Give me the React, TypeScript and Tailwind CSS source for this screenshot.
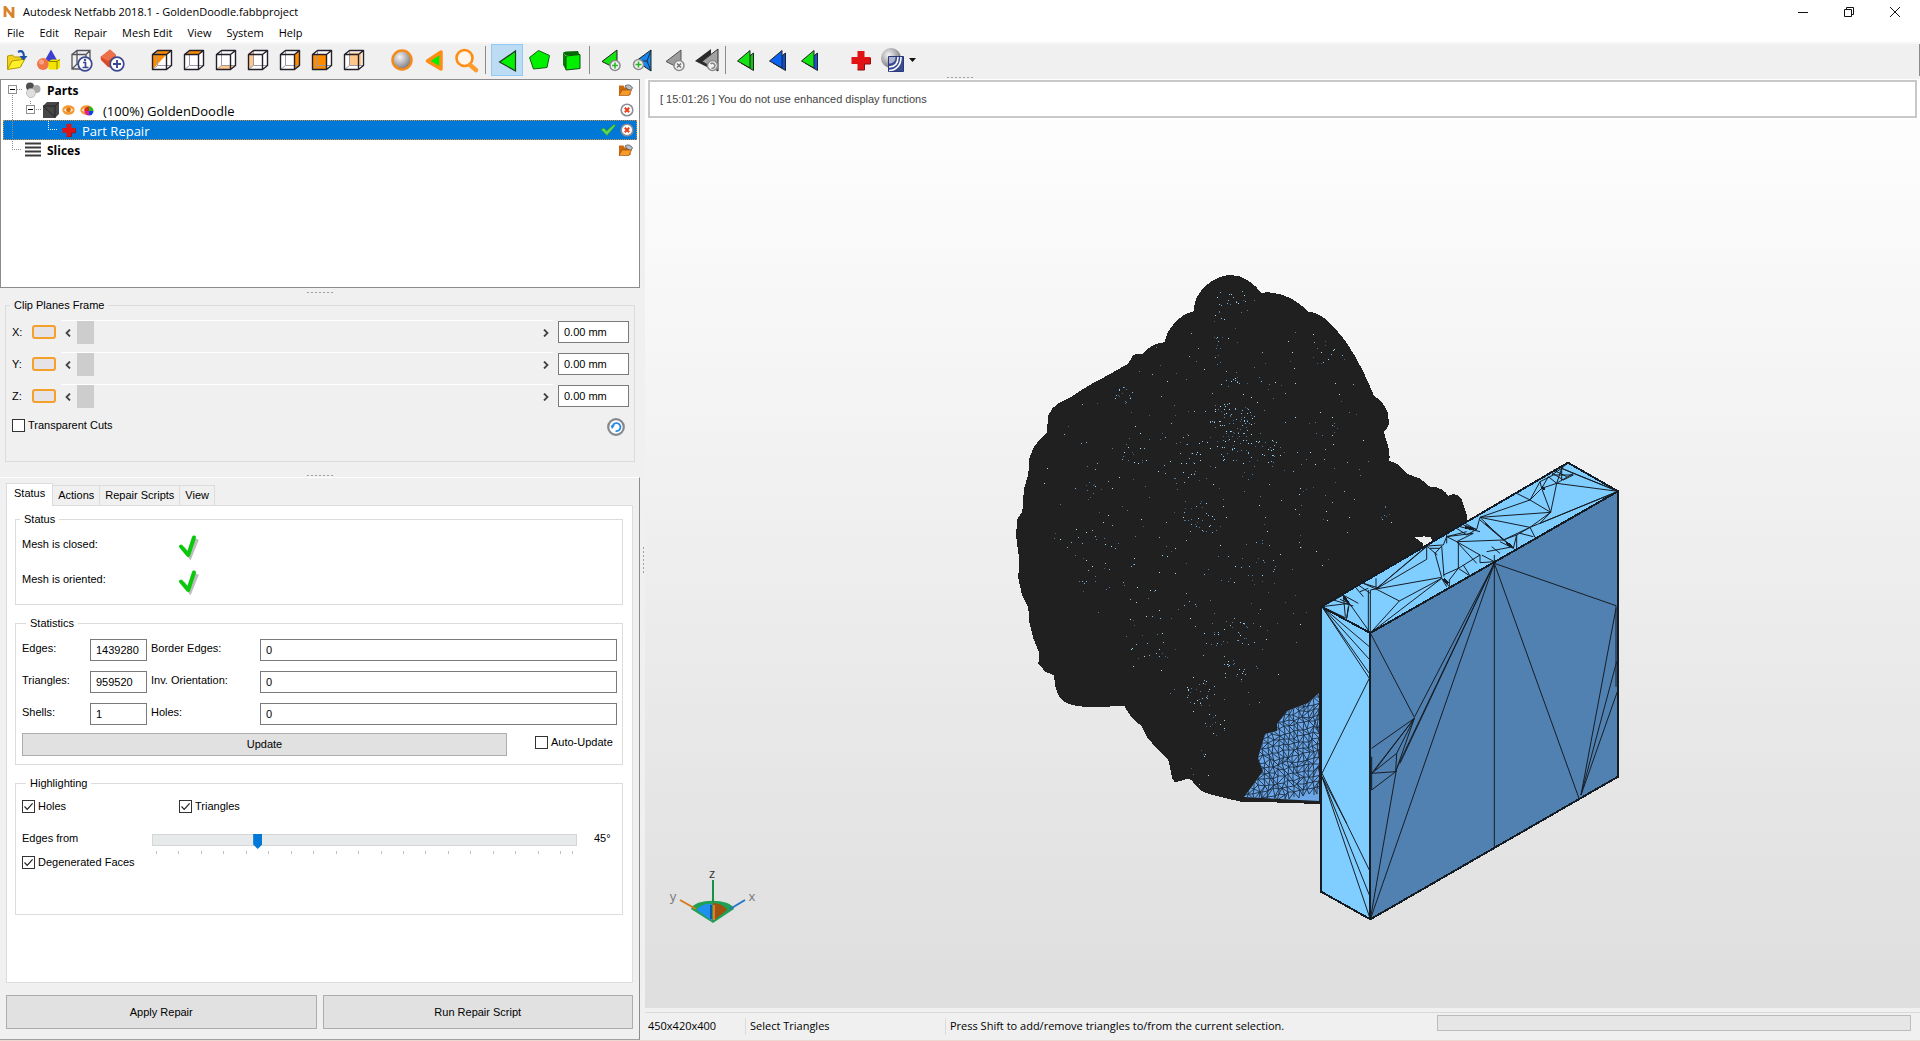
import React, { useState } from "react";

const UI = "font-['Open_Sans','Noto_Sans',sans-serif]";

// ! Small building blocks
const Svg = ({ children, className = "size-8", box = "0 0 32 32" }: any) => (
  <svg className={`shrink-0 ${className}`} viewBox={box} fill="none" aria-hidden="true">
    {children}
  </svg>
);

const Check = ({ id, label, checked = false }: any) => {
  const [on, setOn] = useState(checked);
  return (
    <label htmlFor={id} className="flex items-center gap-[3px]">
      <span className="grid size-[13px]">
        <input
          id={id}
          type="checkbox"
          checked={on}
          onChange={(e) => setOn(e.target.checked)}
          className="peer col-start-1 row-start-1 size-[13px] appearance-none border border-[#333] bg-white"
        />
        <svg
          viewBox="0 0 13 13"
          className="pointer-events-none invisible col-start-1 row-start-1 size-[13px] peer-checked:visible"
        >
          <path d="M2.5 6.5 5.2 9.3 10.6 3.4" stroke="#222" strokeWidth="1.2" fill="none" />
        </svg>
      </span>
      {label}
    </label>
  );
};

const Group = ({ title, children, className = "" }: any) => (
  <fieldset className={`min-w-0 border border-[#dcdcdc] ${className}`}>
    <legend className="ml-1 px-1 leading-4">{title}</legend>
    {children}
  </fieldset>
);

const Grip = ({ vertical = false }: any) => (
  <span
    className={
      vertical
        ? "block h-7 w-[3px] bg-[radial-gradient(circle,#a0a0a0_1px,transparent_1px)] bg-[length:3px_4px]"
        : "block h-[3px] w-7 bg-[radial-gradient(circle,#a0a0a0_1px,transparent_1px)] bg-[length:4px_3px]"
    }
  />
);

// ! Toolbar icons
const Cube = ({ children }: any) => (
  <Svg>
    <path d="M6.5 10.5 11.5 6.5h14v15l-5 4h-14z" fill="#fff" />
    {children}
    <path d="M11.5 6.5v15h14M11.5 21.5l-5 4" stroke="#9a9aa8" />
    <path
      d="M6.5 10.5h14v15h-14zM6.5 10.5l5-4h14v15l-5 4M20.5 10.5l5-4"
      stroke="#23202a"
      strokeWidth="1.4"
      strokeLinejoin="round"
    />
  </Svg>
);

const Badge = ({ x, y, color, children }: any) => (
  <g>
    <circle cx={x} cy={y} r="5" fill="#f2f2f2" stroke="#8a8a8a" strokeWidth="1.5" />
    <g stroke={color} strokeWidth="1.6">{children}</g>
  </g>
);

const DoubleTriangle = ({ front, back }: any) => (
  <Svg>
    <path d="M11 19 23.5 9v17.5z" fill={back} stroke="#222" />
    <path d="M7.5 17 20 6.5V24z" fill={front} stroke="#222" />
  </Svg>
);

const RedCross = ({ className, box = "0 0 32 32" }: any) => (
  <Svg className={className} box={box}>
    <path d="M12.5 7h7v6h6v7h-6v6h-7v-6h-6v-7h6z" fill="#e01414" />
    <path d="M19.5 20h6v-6M12.5 26h7v-6" stroke="#8e0b0b" />
  </Svg>
);

const fileTools = [
  {
    name: "Open",
    icon: (
      <Svg>
        <path d="M7.5 12l5-1 2 2h7v9l-14 3z" fill="#f2d21c" stroke="#b39a00" />
        <path d="M7.5 25.5 12 17l13-2-5 8.500z" fill="#fff02a" stroke="#b39a00" />
        <path d="M18 8c4-2 6 0 6 5" stroke="#1d4fae" strokeWidth="2.2" />
        <path d="M19.5 12h8L23.500 16.500z" fill="#1d4fae" />
      </Svg>
    ),
  },
  {
    name: "Add primitive",
    icon: (
      <Svg>
        <path d="M19 5.5 25.5 17h-13z" fill="#3d3fd0" />
        <circle cx="11" cy="20" r="6" fill="#f0764a" />
        <circle cx="9.5" cy="18" r="2.5" fill="#f9a683" />
        <path d="M16.5 17.5l3-2H28v8l-3 2h-8.5z" fill="#f3e500" />
        <path d="M16.5 17.5H25v8M25 17.5l3-2" stroke="#8a8200" />
      </Svg>
    ),
  },
  {
    name: "Part information",
    icon: (
      <Svg>
        <path
          d="M8 10.5h14V25H8zM8 10.5l5-4h13V20M22 10.5l4-4M13 6.500V20l-5 5M13 20h9"
          stroke="#55555c"
          strokeWidth="1.3"
        />
        <circle cx="21" cy="20" r="6.8" fill="#fff" stroke="#3b4a8f" strokeWidth="1.7" />
        <path d="M19 18.5h2.500v5M18.500 23.500h6" stroke="#3b4a8f" strokeWidth="1.7" />
        <circle cx="21" cy="16" r="1.2" fill="#3b4a8f" />
      </Svg>
    ),
  },
  {
    name: "Add part repair",
    icon: (
      <Svg>
        <path d="M4.500 13 14 5.500l6 5.500-4 13-4-1-7-7z" fill="#d94a26" />
        <path d="M4.500 13l9.500-7.500 6 5.500-8 6z" fill="#ee7048" />
        <circle cx="21" cy="20" r="6.8" fill="#fff" stroke="#3b4a8f" strokeWidth="1.7" />
        <path d="M21 16v8M17 20h8" stroke="#3b4a8f" strokeWidth="1.9" />
      </Svg>
    ),
  },
];

const cubeTools = [
  { name: "Isometric view", icon: <Cube><path d="M6.5 10.5l5-4h14l-5 4-14 15z" fill="#ff8c00" /></Cube> },
  { name: "Top view", icon: <Cube><path d="M6.5 10.5l5-4h14l-5 4z" fill="#ff8c00" /></Cube> },
  { name: "Bottom view", icon: <Cube><path d="M6.5 25.5l5-4h14l-5 4z" fill="#ffc68c" /></Cube> },
  { name: "Left view", icon: <Cube><path d="M6.5 10.5l5-4v15l-5 4z" fill="#ffc68c" /></Cube> },
  { name: "Right view", icon: <Cube><path d="M20.5 10.5l5-4v15l-5 4z" fill="#ff8c00" /></Cube> },
  { name: "Front view", icon: <Cube><path d="M6.5 10.5h14v15h-14z" fill="#ff8c00" /></Cube> },
  { name: "Back view", icon: <Cube><path d="M11.5 8.500h12v13h-12z" fill="#ffc68c" /></Cube> },
];

const zoomTools = [
  {
    name: "Zoom to all",
    icon: (
      <Svg>
        <circle cx="16" cy="16" r="9.5" fill="url(#ball)" stroke="#f58a1c" strokeWidth="2.5" />
      </Svg>
    ),
  },
  {
    name: "Zoom to selection",
    icon: (
      <Svg>
        <path d="M9.500 17 23 8v17z" fill="#00f000" stroke="#ff8c14" strokeWidth="3.5" strokeLinejoin="round" />
      </Svg>
    ),
  },
  {
    name: "Zoom window",
    icon: (
      <Svg>
        <circle cx="14.5" cy="14" r="8" fill="#fdf6ee" stroke="#ff8c14" strokeWidth="2.6" />
        <path d="M20 21l6 5" stroke="#ff9a2c" strokeWidth="4.5" strokeLinecap="round" />
      </Svg>
    ),
  },
];

const selectTools = [
  {
    name: "Select triangles",
    active: true,
    icon: <Svg><path d="M8.500 18 24.500 7v20z" fill="#00f000" stroke="#1c3a1c" strokeWidth="1.2" /></Svg>,
  },
  {
    name: "Select surfaces",
    icon: <Svg><path d="M6.500 13.500 15.500 6.500 26.500 11.500 24 23.500l-13.500 1.500z" fill="#00f000" stroke="#116011" /></Svg>,
  },
  {
    name: "Select shells",
    icon: (
      <Svg>
        <path d="M8 8.500 11 7.500l12-.5 1.500 4-14 .5z" fill="#046b04" />
        <path d="M8 8.500l3 4V26l-3-5z" fill="#077a07" />
        <path d="M11 12l14-1.500v14L11 26z" fill="#00f000" stroke="#0b500b" />
      </Svg>
    ),
  },
];

const editTools = [
  {
    name: "Add triangle",
    icon: (
      <Svg>
        <path d="M7 17.5 22 6v19z" fill="#13e213" stroke="#222" />
        <Badge x={20} y={21.5} color="#2ab52a"><path d="M20 18.500v6M17 21.500h6" /></Badge>
      </Svg>
    ),
  },
  {
    name: "Add edge",
    icon: (
      <Svg>
        <path d="M9 17 24 6v21z" fill="#1786e8" stroke="#222" />
        <path d="M24 6 20 17l4 10M9 17h11" stroke="#14314e" />
        <Badge x={11.5} y={20.5} color="#2ab52a"><path d="M11.500 17.500v6M8.500 20.500h6" /></Badge>
      </Svg>
    ),
  },
  {
    name: "Remove triangle",
    icon: (
      <Svg>
        <path d="M7 17.5 22 6v19z" fill="#9c9c9c" stroke="#555" />
        <Badge x={20} y={21.5} color="#777"><path d="M18 19.500l4 4M22 19.500l-4 4" /></Badge>
      </Svg>
    ),
  },
  {
    name: "Invert triangles",
    icon: (
      <Svg>
        <path d="M4 17 20 5v20z" fill="#2b2b2b" />
        <path d="M11 17.5 27 5v22z" fill="#a2a2a2" stroke="#333" />
        <Badge x={21.5} y={21.5} color="#888"><path d="M19.500 20a2.500 2.500 0 1 1 1 4" /></Badge>
      </Svg>
    ),
  },
];

const moveTools = [
  { name: "Duplicate triangles", icon: <DoubleTriangle front="#13e213" back="#13c213" /> },
  { name: "Detach triangles", icon: <DoubleTriangle front="#0a62f0" back="#0a4fd0" /> },
  { name: "Cut triangles", icon: <DoubleTriangle front="#13e213" back="#1d4fe0" /> },
];

const repairTools = [
  { name: "Repair", icon: <RedCross className="size-8" /> },
  {
    name: "Display mode",
    icon: (
      <Svg>
        <circle cx="14" cy="14" r="10" fill="url(#ball)" />
        <path d="M11.500 12.500h15v15h-15z" fill="#3a4b93" stroke="#2a3878" />
        <path d="M12 23c6 0 9-4 9-10M12 26.500c8 0 12-6 12-13.500" stroke="#fff" strokeWidth="1.600" />
        <path d="M12 13h6.500c0 4-2 6.500-6.500 6.500z" fill="#aeb5cf" />
      </Svg>
    ),
  },
];

const Tools = ({ items, className = "" }: any) => (
  <div className={`flex ${className}`}>
    {items.map((tool: any) => (
      <button
        key={tool.name}
        aria-label={tool.name}
        className={`flex size-8 items-center justify-center ${
          tool.active ? "bg-[#bcdcf4] outline outline-1 -outline-offset-1 outline-[#90c8f6]" : ""
        }`}
      >
        {tool.icon}
      </button>
    ))}
  </div>
);

const Separator = ({ className }: any) => <span className={`mt-[2px] h-7 w-px bg-[#8c8c8c] ${className}`} />;

const Toolbar = () => (
  <div className="flex h-[37px] shrink-0 items-start border-t-2 border-[#f7f7f7] bg-[#f0f0f0]">
    <Tools items={fileTools} />
    <Tools items={cubeTools} className="ml-[18px]" />
    <Tools items={zoomTools} className="ml-4" />
    <Separator className="ml-[3px] mr-[5px]" />
    <Tools items={selectTools} />
    <Separator className="ml-[2px] mr-[5px]" />
    <Tools items={editTools} />
    <Separator className="ml-[2px] mr-[4px]" />
    <Tools items={moveTools} />
    <Tools items={repairTools} className="ml-[19px]" />
    <button aria-label="Display mode options" className="flex h-8 items-center">
      <Svg className="h-1 w-[7px]" box="0 0 7 4">
        <path d="M0 0h7L3.5 4z" fill="#111" />
      </Svg>
    </button>
    <span className="ml-[30px] self-end"><Grip /></span>
    <span className="ml-auto h-8 w-px bg-[#8c8c8c]" />
  </div>
);

// ! Project tree
const Folder = () => (
  <Svg className="h-3 w-4" box="0 0 16 12">
    <path d="M1 1.5h4.500l1 2h6v7.500H1z" fill="#c9690c" />
    <path d="M7 2c3-2 6-1 7.500 2L12.500 6.500 9 5z" fill="#b9bec6" stroke="#4a4f57" strokeWidth=".8" />
    <path d="M1 11.500 4 6h9.500L11 11.500z" fill="#f79a28" stroke="#8e4a06" strokeWidth=".6" />
  </Svg>
);

const Close = () => (
  <Svg className="size-[14px]" box="0 0 14 14">
    <circle cx="7" cy="7" r="5.8" fill="#fff" stroke="#8a8d94" strokeWidth="1.6" />
    <path d="M4.800 4.800l4.400 4.400M9.200 4.800 4.800 9.200" stroke="#e8401c" strokeWidth="2" />
  </Svg>
);

const Eye = ({ colored = false }: any) => (
  <Svg className="h-3 w-[14px]" box="0 0 14 12">
    <ellipse cx="6.5" cy="6" rx="6.2" ry="4.8" fill="#f39a35" />
    <path d="M1.500 6q5-4.500 10 0-5 4.500-10 0z" fill="#fde7cc" />
    <circle cx="6.5" cy="5.8" r="2.4" fill="#d9700c" />
    {colored && (
      <g>
        <path d="M9 7V2.500A4.500 4.500 0 0 1 13.500 7z" fill="#18c018" />
        <path d="M9 7h4.500A4.500 4.500 0 0 1 9 11.500z" fill="#1640e8" />
        <path d="M9 7v4.500A4.500 4.500 0 0 1 4.500 7z" fill="#e02090" />
        <path d="M9 7H4.500A4.500 4.500 0 0 1 9 2.500z" fill="#e82020" />
      </g>
    )}
  </Svg>
);

const Tree = () => (
  <div className={`relative h-[209px] shrink-0 border border-[#8c8c8c] bg-white px-[2px] text-[13px] leading-5 ${UI}`}>
    <ul>
      <li className="flex h-5 items-center pl-[22px] pr-[3px] text-xs font-bold">
        <Svg className="mr-1.5 size-4" box="0 0 16 16">
          <circle cx="5" cy="4.5" r="4" fill="#4e4e4e" />
          <circle cx="11.5" cy="7" r="4" fill="#a8a8a8" />
          <circle cx="6" cy="11" r="4.6" fill="#dedede" stroke="#aaa" strokeWidth=".6" />
        </Svg>
        <span className="flex-1 pt-[2px]">Parts</span>
        <Folder />
      </li>
      <li className="flex h-5 items-center pl-10 pr-[3px]">
        <Svg className="mr-[3px] size-4" box="0 0 16 16">
          <path d="M0 4 4 0h12v12l-4 4H0z" fill="#474747" />
          <path d="M0 4h12v12M12 4l4-4M1 5l11 10" stroke="#262626" />
        </Svg>
        <Eye />
        <span className="ml-1 mr-[9px] flex"><Eye colored /></span>
        <span className="flex-1 pt-[2px]">(100%) GoldenDoodle</span>
        <Close />
      </li>
      <li className="flex h-5 items-center border border-dotted border-[#d98c3a] bg-[#0078d7] pl-[58px] pr-[2px] text-white">
        <RedCross className="mr-1.5 size-[14px]" box="6 6 20 20" />
        <span className="flex-1 pt-[2px]">Part Repair</span>
        <Svg className="mr-1 h-3 w-4" box="0 0 16 12">
          <path d="M1 5.500 4 4l2.500 3L14 .5l1.500 1L7 11.500z" fill="#5fd84f" stroke="#2c9a1c" strokeWidth=".6" />
        </Svg>
        <Close />
      </li>
      <li className="flex h-5 items-center pl-[22px] pr-[3px] text-xs font-bold">
        <Svg className="mr-1.5 size-4" box="0 0 16 16">
          <path d="M0 1.500h16M0 5.500h16M0 9.500h16M0 13.500h16" stroke="#3c3c3c" strokeWidth="2" />
        </Svg>
        <span className="flex-1 pt-[2px]">Slices</span>
        <Folder />
      </li>
    </ul>
    {/* connector lines over the rows */}
    <svg className="pointer-events-none absolute left-0 top-0 h-20 w-16" fill="none" shapeRendering="crispEdges">
      <path d="M11.500 15v54.500H21M16 9.500h6M29.500 21v4M35 29.500h5" stroke="#909090" strokeDasharray="1 1" />
      <path d="M47.500 41v8.500H57" stroke="#fff" strokeDasharray="1 1" />
      <path d="M7.500 5.500h8v8h-8zM25.500 25.500h8v8h-8z" fill="#fff" stroke="#909090" />
      <path d="M9 9.500h5M27 29.500h5" stroke="#000" />
    </svg>
  </div>
);

// ! Clip planes
const ClipRow = ({ axis }: any) => (
  <div className="flex h-6 items-center">
    <label htmlFor={`clip-${axis}`} className="w-5">{axis}:</label>
    <button
      aria-label={`Toggle ${axis} plane`}
      className="mr-[5px] h-[14px] w-6 rounded-[3px] border-2 border-[#f6a02c] bg-[#e6e3e6]"
    />
    <div className="flex h-full flex-1 items-center border-t border-white">
      <button aria-label={`Decrease ${axis}`} className="flex w-4 pl-1">
        <Svg className="h-2 w-[6px]" box="0 0 6 8"><path d="M5 .5 1.500 4 5 7.500" stroke="#444" strokeWidth="1.8" /></Svg>
      </button>
      <input
        id={`clip-${axis}`}
        type="range"
        min={0}
        max={100}
        defaultValue={0}
        className="h-[23px] min-w-0 flex-1 appearance-none bg-transparent [&::-webkit-slider-thumb]:h-[23px] [&::-webkit-slider-thumb]:w-[17px] [&::-webkit-slider-thumb]:appearance-none [&::-webkit-slider-thumb]:bg-[#cdcdcd]"
      />
      <button aria-label={`Increase ${axis}`} className="flex w-4 justify-end pr-1">
        <Svg className="h-2 w-[6px]" box="0 0 6 8"><path d="M1 .5 4.500 4 1 7.500" stroke="#444" strokeWidth="1.8" /></Svg>
      </button>
    </div>
    <input
      aria-label={`${axis} position`}
      defaultValue="0.00 mm"
      className="ml-[5px] h-[22px] w-[71px] border border-[#7a7a7a] bg-white px-[5px]"
    />
  </div>
);

const ClipPlanes = () => (
  <Group title="Clip Planes Frame" className="mx-[5px] shrink-0 pb-[25px]">
    <div className="flex flex-col gap-2 pl-1.5 pr-[5px] pt-[7px]">
      {["X", "Y", "Z"].map((axis) => (
        <ClipRow key={axis} axis={axis} />
      ))}
      <div className="flex h-5 items-center justify-between pr-1">
        <div className="pb-[2px]"><Check id="transparent" label="Transparent Cuts" /></div>
        <button aria-label="Reset planes" className="pt-[2px]">
          <Svg className="size-[18px]" box="0 0 18 18">
            <circle cx="9" cy="9" r="7.8" fill="#fff" stroke="#85888e" strokeWidth="2.2" />
            <path d="M5.500 8.500a4 4 0 1 1 3 4.500" stroke="#2a8ae8" strokeWidth="1.8" />
            <path d="M3.500 7.500H8l-3 3.500z" fill="#2a8ae8" />
          </Svg>
        </button>
      </div>
    </div>
  </Group>
);

// ! Repair panel
const statistics = [
  { label: "Edges:", value: "1439280", label2: "Border Edges:", value2: "0" },
  { label: "Triangles:", value: "959520", label2: "Inv. Orientation:", value2: "0" },
  { label: "Shells:", value: "1", label2: "Holes:", value2: "0" },
];

const field = "h-[22px] w-full min-w-0 border border-[#7a7a7a] bg-white px-[5px]";
const pushButton = "border border-[#adadad] bg-[#e1e1e1]";

const StatusCheck = () => (
  <Svg className="h-[30px] w-6" box="0 0 24 30">
    <path d="M6 18 13 26.500 20 9" stroke="#888" strokeWidth="4" opacity=".55" />
    <path
      d="M4 16.500 11.200 25 17 7.500"
      stroke="#0cc80c"
      strokeWidth="4"
      strokeLinecap="round"
      strokeLinejoin="round"
    />
  </Svg>
);

const RepairPanel = () => (
  <div className="flex min-h-0 flex-1 flex-col border-b border-r border-t border-b-[#a0a0a0] border-r-[#8c8c8c] border-t-white px-1.5 pb-[10px] pt-[5px]">
    <div role="tablist" className="flex items-end">
      {["Status", "Actions", "Repair Scripts", "View"].map((tab, i) => (
        <button
          key={tab}
          role="tab"
          aria-selected={i === 0}
          className={
            i === 0
              ? "z-10 -mb-px h-[23px] border border-b-0 border-[#dcdcdc] bg-white px-[7px] pb-1"
              : "h-5 border border-b-0 border-l-0 border-[#dcdcdc] bg-[#f0f0f0] px-[5px]"
          }
        >
          {tab}
        </button>
      ))}
    </div>
    <div className="flex flex-1 flex-col gap-[10px] border border-[#dcdcdc] bg-white pl-2 pr-[9px] pt-[5px]">
      <Group title="Status" className="pb-[7px]">
        {["Mesh is closed:", "Mesh is oriented:"].map((text) => (
          <div key={text} className="flex h-[35px] items-center pl-1.5">
            <span className="w-[155px]">{text}</span>
            <StatusCheck />
          </div>
        ))}
      </Group>
      <Group title="Statistics" className="pb-2 pl-1.5 pr-[5px] pt-2">
        <div className="flex flex-col gap-[10px]">
          {statistics.map((row) => (
            <div key={row.label} className="grid grid-cols-[68px_57px_113px_1fr] leading-[18px]">
              <label htmlFor={row.label}>{row.label}</label>
              <input id={row.label} readOnly value={row.value} className={field} />
              <label htmlFor={row.label2} className="pl-1">{row.label2}</label>
              <input id={row.label2} readOnly value={row.value2} className={field} />
            </div>
          ))}
        </div>
        <div className="mt-2 flex items-center">
          <button className={`mr-7 h-[23px] flex-1 ${pushButton}`}>Update</button>
          <div className="w-[82px] pb-1"><Check id="auto-update" label="Auto-Update" /></div>
        </div>
      </Group>
      <Group title="Highlighting" className="pb-11 pl-1.5 pr-[5px] pt-[7px]">
        <div className="flex h-4 items-center">
          <div className="w-[157px]"><Check id="holes" label="Holes" checked /></div>
          <Check id="triangles" label="Triangles" checked />
        </div>
        <div className="mt-4 flex h-6 items-start leading-4">
          <label htmlFor="edges-from" className="w-[130px]">Edges from</label>
          <div className="flex-1 pt-1">
            <input
              id="edges-from"
              type="range"
              min={0}
              max={185}
              defaultValue={45}
              className="block h-[15px] w-full appearance-none bg-transparent [&::-webkit-slider-runnable-track]:h-[12px] [&::-webkit-slider-runnable-track]:self-start [&::-webkit-slider-runnable-track]:bg-[#e7eaea] [&::-webkit-slider-runnable-track]:outline [&::-webkit-slider-runnable-track]:outline-1 [&::-webkit-slider-runnable-track]:-outline-offset-1 [&::-webkit-slider-runnable-track]:outline-[#d6d6d6] [&::-webkit-slider-thumb]:h-[15px] [&::-webkit-slider-thumb]:w-[9px] [&::-webkit-slider-thumb]:appearance-none [&::-webkit-slider-thumb]:bg-[#0078d7] [&::-webkit-slider-thumb]:[clip-path:polygon(0_0,100%_0,100%_70%,50%_100%,0_70%)]"
            />
            <div className="mx-1 mt-[2px] flex h-[3px]">
              {Array.from({ length: 18 }).map((_, i) => (
                <span key={i} className="flex-2 border-l border-[#c0c0c0]" />
              ))}
              <span className="flex-1 border-x border-[#c0c0c0]" />
            </div>
          </div>
          <span className="w-10 pl-[17px]">45°</span>
        </div>
        <div className="flex h-4 items-center">
          <Check id="degenerated" label="Degenerated Faces" checked />
        </div>
      </Group>
    </div>
    <div className="mt-3 flex gap-1.5">
      <button className={`h-[34px] flex-1 ${pushButton}`}>Apply Repair</button>
      <button className={`h-[34px] flex-1 ${pushButton}`}>Run Repair Script</button>
    </div>
  </div>
);

// ! 3D view
const random = (seed: number) => () => {
  seed = (seed * 1664525 + 1013904223) % 4294967296;
  return seed / 4294967296;
};

// center x, center y, radius x, radius y, amount
const clusters = [
  [1240, 301, 14, 12, 16],
  [1219, 330, 6, 40, 20],
  [1320, 350, 14, 14, 12],
  [1122, 394, 12, 10, 14],
  [1230, 380, 10, 10, 12],
  [1232, 420, 24, 18, 60],
  [1240, 446, 26, 20, 50],
  [1134, 453, 12, 12, 12],
  [1190, 455, 10, 25, 18],
  [1272, 452, 8, 16, 12],
  [1325, 425, 14, 14, 10],
  [1200, 516, 18, 18, 24],
  [1085, 490, 12, 10, 8],
  [1255, 560, 24, 20, 14],
  [1386, 515, 10, 10, 8],
  [1235, 632, 34, 18, 34],
  [1150, 652, 22, 12, 12],
  [1200, 695, 18, 18, 28],
  [1215, 725, 12, 14, 14],
  [1240, 670, 20, 12, 18],
  [1200, 765, 12, 20, 10],
  [1090, 560, 26, 40, 18],
  [1210, 520, 120, 200, 190],
  [1140, 500, 100, 130, 90],
  [1300, 450, 70, 120, 70],
];

const specks = (() => {
  const rnd = random(7);
  return clusters.flatMap(([cx, cy, rx, ry, n]) =>
    Array.from({ length: n }).map(() => {
      const a = rnd() * Math.PI * 2;
      const r = Math.sqrt(rnd());
      return {
        x: Math.round(cx + Math.cos(a) * r * rx),
        y: Math.round(cy + Math.sin(a) * r * ry),
        fill: ["#a4d8f8", "#7fb2dc", "#4e7da6", "#46617c"][Math.floor(rnd() * 4)],
      };
    })
  );
})();

// dense wire mesh on the smooth part of the model
const wire = (() => {
  const rnd = random(21);
  const cols = 17;
  const rows = 25;
  const pts = Array.from({ length: rows }).map((_, r) =>
    Array.from({ length: cols }).map((_, c) => [
      Math.round(1242 + c * 5 + rnd() * 3),
      Math.round(662 + r * 6 - c + rnd() * 3),
    ])
  );
  let d = "";
  for (let r = 0; r < rows - 1; r++) {
    for (let c = 0; c < cols - 1; c++) {
      const [x, y] = pts[r][c];
      const [x1, y1] = pts[r][c + 1];
      const [x2, y2] = pts[r + 1][c];
      const [x3, y3] = pts[r + 1][c + 1];
      d += `M${x2} ${y2}L${x} ${y}L${x1} ${y1}`;
      d += rnd() > 0.35 ? `M${x} ${y}L${x3} ${y3}` : `M${x1} ${y1}L${x2} ${y2}`;
    }
  }
  return d;
})();

const Scene = () => (
  <svg
    className="absolute inset-0 size-full"
    viewBox="645 79 1275 929"
    fill="none"
    role="img"
    aria-label="GoldenDoodle mesh"
  >
    <defs>
      <clipPath id="patch">
        <path d="M1319 693 1308 703 1287 711 1277 724 1277 731 1265 734 1258 758 1263 771 1253 785 1244 797 1319 801z" />
      </clipPath>
    </defs>
    <g transform="translate(1000 260) scale(.33333 .35714)" shapeRendering="crispEdges">
      <path
        fill="#202020"
        d="M583 143C575 95 640 42 692 42C730 42 760 65 785 92C840 85 890 110 925 145C965 145 1000 185 1035 225C1075 280 1100 330 1122 380C1150 395 1172 425 1165 465L1152 482C1158 510 1172 530 1168 562L1190 570 1225 600 1260 612 1290 635C1310 632 1335 645 1345 660C1365 650 1385 660 1388 680L1401 715V745L1300 800 1293 777 1275 774 1243 775 1270 795 1240 850 970 975V1525L880 1520 725 1517C690 1510 640 1500 610 1490C590 1480 580 1455 565 1452L525 1463C510 1450 515 1430 505 1400C480 1370 440 1350 425 1305C400 1290 385 1270 373 1248C350 1245 320 1255 290 1252C240 1252 195 1248 180 1225C165 1205 165 1190 162 1163L135 1152 115 1130 118 1100 100 1060 88 1015 85 975 65 935 55 890 57 835 48 770 52 725 67 705 72 640 85 600 88 555 103 520 140 485 145 435C155 405 190 395 215 382L265 352 325 322 385 290 400 265 430 262C450 240 470 232 495 230C495 200 540 150 578 145Z"
      />
    </g>
    <g shapeRendering="crispEdges">
      {specks.map((s, i) => (
        <rect key={i} x={s.x} y={s.y} width="1" height="1" fill={s.fill} />
      ))}
    </g>
    <g clipPath="url(#patch)">
      <path d="M1240 690h82v115h-82z" fill="#6ba6e8" />
      <path d={wire} stroke="#1c2c40" strokeWidth=".9" />
    </g>
    {/* slab */}
    <g
      transform="translate(1300 440) scale(.33333)"
      stroke="#161c24"
      strokeWidth="3"
      strokeLinejoin="round"
      shapeRendering="crispEdges"
    >
      <path d="M64 500 211 579V1438L63 1355z" fill="#80ceff" strokeWidth="6" />
      <path d="M64 500 804 68 954 154 211 579z" fill="#80ceff" strokeWidth="6" />
      <path d="M211 579 954 154V1010L211 1438z" fill="#5181b1" strokeWidth="6" />
      <path d="M62 880V1320M954 154V740" strokeWidth="7" />
      <path d="M583 370V1222M583 370 948 497M583 370 838 1078M948 505 843 1065M950 665 843 1065M952 755 843 1065M948 497V740" />
      <path d="M211 579 343 832 583 370 300 970M583 370 290 985 211 1438M583 370 211 1438M343 835 215 925M343 835 215 1000 290 940 343 835M343 835 287 995 215 1050M343 835 225 990M215 1000 287 995 290 940M215 950V1050" />
      <path d="M66 500 208 620M66 500 208 658M66 500 208 700M66 500 208 715 66 1000M66 1000 208 1290M66 1010 140 1150M66 1010 208 1365M66 1010 211 1438" />
      {/* top face triangles */}
      <path d="M66 500 130 465 148 490 66 500 140 535 148 490 120 478M100 480 160 498M130 465 136 530M148 490 211 579M140 535 145 500M120 460 175 490M165 440 190 470M175 435 211 460M180 455 205 445M190 430 228 447V415" />
      <path d="M211 579V450L228 447 298 483 211 579M205 575V450M298 483 425 415 211 579M228 447 425 412M228 447 380 318V358L228 447M228 447 380 320M190 430 240 445" />
      <path d="M380 318 430 315 440 290 470 305M405 340 425 318 432 410M405 340 425 412M380 318 412 345M390 325 420 325M425 415 448 440V420L475 385V305L610 300M425 415 440 440M430 405 475 385 510 408 490 375M475 385 540 345 470 305M470 305 530 370" />
      <path d="M440 290 500 275M470 265 500 285 530 268 490 255M480 260 540 275M495 250 530 270M440 290 520 280 470 305M440 265V310M540 232 610 300 690 262 540 232M540 232 752 217M690 180 540 232M540 240 640 325 650 285 610 300M555 250 625 310M540 232 530 268" />
      <path d="M540 345V368L583 365 545 345M583 345V370M560 335 640 320M575 320 600 340M600 305 640 325M650 285V325M705 292 690 262 650 285M660 280 700 290M690 262 954 154 720 250M720 250 752 217M690 262 752 217" />
      <path d="M650 160 690 180 725 145 770 130 752 217 690 180M725 145 752 217M720 125 725 145 745 110 770 130 785 85 820 100 770 130 954 154M820 100 954 154 785 85M690 180 720 125M720 125 760 105 820 105 790 120 750 95M760 90 800 110M785 85V120M804 68 785 85 755 105" />
      <path d="M725 140 735 150M130 470 146 488M495 262 522 268M432 417 445 430M620 308 635 320" strokeWidth="7" />
    </g>
    {/* axis marker */}
    <g strokeWidth="2">
      <path d="M691 909c3-11 40-11 43 0l-21 14z" fill="#1fa055" />
      <path d="M697 909q7-6 15-5v17l-15-11z" fill="#1e90f0" />
      <path d="M713 903q9 0 14 7l-14 11z" fill="#a0500f" />
      <path d="M714 905v15" stroke="#f07820" />
      <path d="M711 905v14" stroke="#12589c" />
      <path d="M713 880v22" stroke="#189048" />
      <path d="M680 900l16 9" stroke="#d87818" />
      <path d="M745 900l-15 9" stroke="#1f78c8" />
    </g>
    <g className={UI} fontSize="13" textAnchor="middle">
      <text x="712" y="878" fill="#333">z</text>
      <text x="673" y="901" fill="#777">y</text>
      <text x="752" y="901" fill="#777">x</text>
    </g>
  </svg>
);

const StatusBar = () => (
  <div className={`flex h-8 shrink-0 flex-col bg-[#f0f0f0] text-[11px] ${UI}`}>
    <div className="mt-1 flex flex-1 items-center border-t border-[#dadada]">
      <span className="w-[100px] pl-[3px]">450x420x400</span>
      <span className="w-[200px] border-l border-[#dcdcdc] pl-1">Select Triangles</span>
      <span className="border-l border-[#dcdcdc] pl-1">
        Press Shift to add/remove triangles to/from the current selection.
      </span>
      <span className="mb-2 ml-auto mr-[9px] h-4 w-[474px] border border-[#bcbcbc] bg-[#e6e6e6]" />
    </div>
  </div>
);

const menu = ["File", "Edit", "Repair", "Mesh Edit", "View", "System", "Help"];

export default function App() {
  return (
    <div className="flex h-screen flex-col overflow-hidden border-b border-[#ecd8d0] bg-[#f0f0f0] font-['Liberation_Sans',Arial,sans-serif] text-[11px] text-black">
      <svg className="absolute size-0" aria-hidden="true">
        <defs>
          <radialGradient id="ball" cx=".38" cy=".35" r=".7">
            <stop offset="0" stopColor="#f4f4f6" />
            <stop offset=".5" stopColor="#b4b4b8" />
            <stop offset="1" stopColor="#6e6e74" />
          </radialGradient>
        </defs>
      </svg>
      <header className={`shrink-0 bg-white text-[11px] ${UI}`}>
        <div className="flex h-6 items-center pl-[3px]">
          <Svg className="mr-2 size-3" box="0 0 12 12">
            <path d="M2 11V1l8 10V1" stroke="#d9822c" strokeWidth="2.8" />
          </Svg>
          <h1>Autodesk Netfabb 2018.1 - GoldenDoodle.fabbproject</h1>
          <div className="ml-auto flex pr-[19px]">
            <button aria-label="Minimize" className="flex w-[46px] justify-end">
              <Svg className="size-3" box="0 0 12 12"><path d="M1 6.500h10" stroke="#111" /></Svg>
            </button>
            <button aria-label="Restore" className="flex w-[46px] justify-end">
              <Svg className="size-3" box="0 0 12 12">
                <path d="M1.500 3.500h7v7h-7zM3.500 3.500v-2h7v7h-2" stroke="#111" />
              </Svg>
            </button>
            <button aria-label="Close" className="flex w-[46px] justify-end">
              <Svg className="size-3" box="0 0 12 12"><path d="M1 1l10 10M11 1 1 11" stroke="#111" /></Svg>
            </button>
          </div>
        </div>
        <nav className="flex h-[18px] items-center gap-[15px] pl-[7px]">
          {menu.map((item) => (
            <button key={item}>{item}</button>
          ))}
        </nav>
      </header>
      <Toolbar />
      <main className="flex min-h-0 flex-1">
        <section className="flex w-1/3 flex-col">
          <Tree />
          <div className="flex h-[9px] shrink-0 items-center justify-center"><Grip /></div>
          <ClipPlanes />
          <div className="flex h-[15px] shrink-0 items-end justify-center"><Grip /></div>
          <RepairPanel />
        </section>
        <div className="flex w-[5px] items-center justify-end"><Grip vertical /></div>
        <section className="flex min-w-0 flex-1 flex-col">
          <div className="relative flex-1 bg-linear-to-b from-white to-[#dedede]">
            <Scene />
            <p className="relative mx-[3px] mt-px flex h-[38px] items-center border-2 border-[#c8c8c8] bg-white pl-[10px] text-[#444]">
              [ 15:01:26 ] You do not use enhanced display functions
            </p>
          </div>
          <StatusBar />
        </section>
      </main>
    </div>
  );
}
